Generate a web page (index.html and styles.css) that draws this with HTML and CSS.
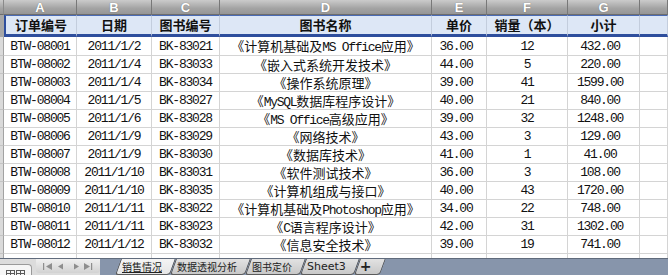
FILE: index.html
```html
<!DOCTYPE html>
<html lang="zh-CN">
<head>
<meta charset="utf-8">
<title>销售情况</title>
<link rel="stylesheet" href="styles.css">
</head>
<body>
<div class="app">
  <div class="sheet">
    <table class="grid">
      <colgroup>
        <col class="c-rh"><col class="c-a"><col class="c-b"><col class="c-c"><col class="c-d"><col class="c-e"><col class="c-f"><col class="c-g"><col class="c-h">
      </colgroup>
      <thead>
        <tr class="letters"><th class="rh"></th><th>A</th><th>B</th><th>C</th><th>D</th><th>E</th><th>F</th><th>G</th><th></th></tr>
      </thead>
      <tbody>
        <tr class="hdr"><td class="rh"></td><td class="first">订单编号</td><td>日期</td><td>图书编号</td><td>图书名称</td><td>单价</td><td>销量（本）</td><td>小计</td><td></td></tr>
        <tr class="row top"><td class="rh"></td><td class="m">BTW-08001</td><td class="m">2011/1/2</td><td class="m">BK-83021</td><td class="t">《计算机基础及<span class="lat">MS Office</span>应用》</td><td class="m e">36.00</td><td class="m">12</td><td class="m g">432.00</td><td></td></tr>
        <tr class="row"><td class="rh"></td><td class="m">BTW-08002</td><td class="m">2011/1/4</td><td class="m">BK-83033</td><td class="t">《嵌入式系统开发技术》</td><td class="m e">44.00</td><td class="m">5</td><td class="m g">220.00</td><td></td></tr>
        <tr class="row"><td class="rh"></td><td class="m">BTW-08003</td><td class="m">2011/1/4</td><td class="m">BK-83034</td><td class="t">《操作系统原理》</td><td class="m e">39.00</td><td class="m">41</td><td class="m g">1599.00</td><td></td></tr>
        <tr class="row"><td class="rh"></td><td class="m">BTW-08004</td><td class="m">2011/1/5</td><td class="m">BK-83027</td><td class="t">《<span class="lat">MySQL</span>数据库程序设计》</td><td class="m e">40.00</td><td class="m">21</td><td class="m g">840.00</td><td></td></tr>
        <tr class="row"><td class="rh"></td><td class="m">BTW-08005</td><td class="m">2011/1/6</td><td class="m">BK-83028</td><td class="t">《<span class="lat">MS Office</span>高级应用》</td><td class="m e">39.00</td><td class="m">32</td><td class="m g">1248.00</td><td></td></tr>
        <tr class="row"><td class="rh"></td><td class="m">BTW-08006</td><td class="m">2011/1/9</td><td class="m">BK-83029</td><td class="t">《网络技术》</td><td class="m e">43.00</td><td class="m">3</td><td class="m g">129.00</td><td></td></tr>
        <tr class="row"><td class="rh"></td><td class="m">BTW-08007</td><td class="m">2011/1/9</td><td class="m">BK-83030</td><td class="t">《数据库技术》</td><td class="m e">41.00</td><td class="m">1</td><td class="m g">41.00</td><td></td></tr>
        <tr class="row"><td class="rh"></td><td class="m">BTW-08008</td><td class="m">2011/1/10</td><td class="m">BK-83031</td><td class="t">《软件测试技术》</td><td class="m e">36.00</td><td class="m">3</td><td class="m g">108.00</td><td></td></tr>
        <tr class="row"><td class="rh"></td><td class="m">BTW-08009</td><td class="m">2011/1/10</td><td class="m">BK-83035</td><td class="t">《计算机组成与接口》</td><td class="m e">40.00</td><td class="m">43</td><td class="m g">1720.00</td><td></td></tr>
        <tr class="row"><td class="rh"></td><td class="m">BTW-08010</td><td class="m">2011/1/11</td><td class="m">BK-83022</td><td class="t">《计算机基础及<span class="lat">Photoshop</span>应用》</td><td class="m e">34.00</td><td class="m">22</td><td class="m g">748.00</td><td></td></tr>
        <tr class="row"><td class="rh"></td><td class="m">BTW-08011</td><td class="m">2011/1/11</td><td class="m">BK-83023</td><td class="t">《<span class="lat">C</span>语言程序设计》</td><td class="m e">42.00</td><td class="m">31</td><td class="m g">1302.00</td><td></td></tr>
        <tr class="row"><td class="rh"></td><td class="m">BTW-08012</td><td class="m">2011/1/12</td><td class="m">BK-83032</td><td class="t">《信息安全技术》</td><td class="m e">39.00</td><td class="m">19</td><td class="m g">741.00</td><td></td></tr>
        <tr class="row"><td class="rh"></td><td></td><td></td><td></td><td></td><td></td><td></td><td></td><td></td></tr>
      </tbody>
    </table>
  </div>
  <div class="tabbar">
    <div class="left">
      <div class="views">
        <svg width="31" height="11" viewBox="0 0 31 11">
          <g fill="none" stroke="#5a5a5a" stroke-width="1">
            <rect x="6.5" y="5.5" width="8" height="6"/>
            <line x1="10.5" y1="5.5" x2="10.5" y2="11"/>
            <line x1="6.5" y1="8.5" x2="14.5" y2="8.5"/>
            <rect x="16.5" y="5.5" width="8" height="6"/>
            <line x1="20.5" y1="5.5" x2="20.5" y2="11"/>
            <line x1="16.5" y1="8.5" x2="24.5" y2="8.5"/>
          </g>
        </svg>
      </div>
      <div class="nav">
        <svg width="64" height="14" viewBox="0 0 64 14">
          <g fill="#8e8e8e">
            <rect x="7" y="4" width="1.2" height="7"/>
            <polygon points="16,4 16,11 10,7.5"/>
            <polygon points="27,4.5 27,10.5 22,7.5"/>
            <polygon points="38,4.5 38,10.5 43,7.5"/>
            <polygon points="48,4 48,11 54,7.5"/>
            <rect x="55" y="4" width="1.2" height="7"/>
          </g>
        </svg>
      </div>
    </div>
    <div class="tabs">
      <div class="tab active"><span class="u">销售情况</span></div>
      <div class="tab">数据透视分析</div>
      <div class="tab">图书定价</div>
      <div class="tab latin">Sheet3</div>
      <div class="tab plus">+</div>
    </div>
  </div>
</div>
</body>
</html>
```
FILE: styles.css
```css
* { box-sizing: border-box; }
html, body { margin: 0; padding: 0; }
body {
  width: 668px;
  height: 275px;
  overflow: hidden;
  background: #fff;
  color: #111;
  font-family: "Noto Sans CJK SC", sans-serif;
}
.app { display: flex; flex-direction: column; height: 275px; }
.sheet { flex: none; height: 258px; overflow: hidden; }

.grid { width: 668px; table-layout: fixed; border-collapse: separate; border-spacing: 0; }
.c-rh { width: 4px; }
.c-a { width: 73px; }
.c-b { width: 75px; }
.c-c { width: 68px; }
.c-d { width: 212px; }
.c-e { width: 55px; }
.c-f { width: 81px; }
.c-g { width: 72px; }
.c-h { width: 28px; }

.grid th, .grid td {
  padding: 0;
  overflow: hidden;
  white-space: nowrap;
  text-align: center;
  vertical-align: middle;
}

.letters { height: 15px; }
.letters th {
  background: linear-gradient(#cbcbcb, #a3a3a3 60%, #969696);
  border-right: 1px solid #787878;
  border-bottom: 1px solid #6d6d6d;
  color: #fff;
  font: bold 13px/13px "Liberation Sans", sans-serif;
  text-shadow: 0 0 1px rgba(0, 0, 0, 0.45);
}
.letters th.rh { border-right: 1px solid #8a8a8a; }

.hdr { height: 22px; }
.hdr td {
  background: #dde7f6;
  border-top: 1px solid #4a6bb5;
  border-bottom: 3px solid #2e4e9d;
  border-right: 1px solid #c3cddd;
  font-size: 13px;
  font-weight: bold;
  line-height: 16px;
  color: #111;
}
.hdr td.rh { background: #a6a6a6; border-right: none; border-top-color: #a6a6a6; border-bottom-color: #a6a6a6; }
.hdr td.first { border-left: 2px solid #2e4e9d; }

.row { height: 18px; }
.row.top { height: 19px; }
.row td {
  border-right: 1px solid #d4d4d4;
  border-bottom: 1px solid #d4d4d4;
  font-size: 13px;
  line-height: 15px;
  color: #111;
}
.row td.rh { background: #dadada; border-right: 1px solid #a2a2a2; border-bottom-color: #c4c4c4; }

.m {
  font-family: "Liberation Mono", monospace;
  letter-spacing: -1.2px;
}
.t { font-family: "Noto Sans CJK SC", sans-serif; }
.lat {
  font-family: "Liberation Mono", monospace;
  letter-spacing: -1.3px;
  line-height: 1;
}
.e { padding-right: 6px !important; }
.g { padding-right: 7px !important; }

/* sheet tab bar */
.tabbar {
  flex: none;
  height: 17px;
  display: flex;
  align-items: flex-start;
  background: #8795ab;
  border-top: 1px solid #606b7c;
  overflow: hidden;
}
.left {
  flex: none;
  width: 100px;
  height: 17px;
  display: flex;
  align-items: flex-start;
  background: #dcdcdc;
}
.views {
  flex: none;
  width: 32px;
  height: 12px;
  margin-top: 5px;
  background: #f6f6f6;
  border-top: 1px solid #9a9a9a;
  border-right: 1px solid #9a9a9a;
  border-radius: 0 4px 0 0;
}
.views svg, .nav svg { display: block; }
.nav {
  flex: none;
  width: 64px;
  height: 14px;
  margin-left: 4px;
  background: linear-gradient(#f0f0f0, #d2d2d2);
  border-radius: 0 0 3px 3px;
}

.tabs {
  display: flex;
  align-items: flex-start;
  margin-left: 15px;
}
.tab {
  position: relative;
  z-index: 0;
  height: 16px;
  padding: 0 8px 0 7px;
  font-size: 10px;
  line-height: 15px;
  color: #222;
}
.tab::before {
  content: "";
  position: absolute;
  inset: 0;
  z-index: -1;
  background: linear-gradient(#e2e2e2, #c8c8c8);
  border: 1px solid #5b5b5b;
  border-top: 0;
  border-radius: 0 0 4px 3px;
  transform: skewX(-20deg);
  transform-origin: 0 100%;
}
.tab.active { z-index: 2; }
.tab.active::before { background: linear-gradient(#f4f4f4, #e6e6e6); }
.tab .u { text-decoration: underline; }
.tab.latin { font-family: "DejaVu Sans", sans-serif; font-size: 11px; }
.tab.plus { font-family: "DejaVu Sans", sans-serif; font-size: 14px; font-weight: bold; line-height: 14px; padding: 0 8px 0 6px; }
```
